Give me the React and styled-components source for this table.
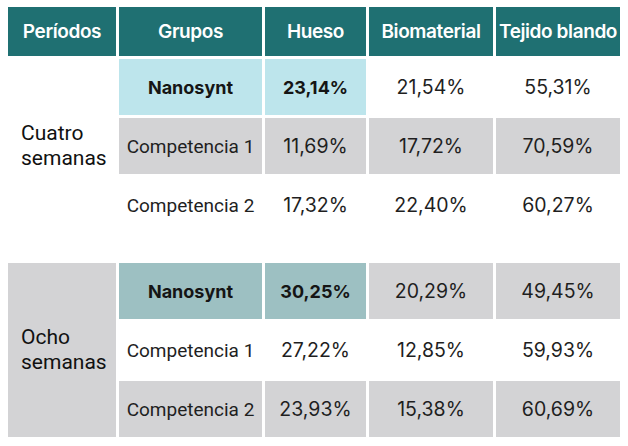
import React from 'react';
import styled, { createGlobalStyle } from 'styled-components';

const GlobalStyle = createGlobalStyle`
  html, body {
    margin: 0;
    padding: 0;
    background: #ffffff;
  }
  body {
    font-family: Roboto, "Liberation Sans", sans-serif;
    color: #1e1e1e;
  }
`;

const Page = styled.div`
  padding: 7px 8px 0 8px;
  display: flex;
  flex-direction: column;
  gap: 3px;
`;

const Grid = styled.div`
  display: grid;
  grid-template-columns: 108px 143px 101px 124px 124px;
  grid-auto-rows: ${props => props.$rowHeight}px;
  gap: 3px;
  margin-top: ${props => props.$offset || 0}px;
`;

const HeadCell = styled.div`
  background: #1f7072;
  color: #ffffff;
  font-family: Inter, "Noto Sans", sans-serif;
  font-weight: 600;
  font-size: 19px;
  letter-spacing: -0.4px;
  display: flex;
  align-items: center;
  justify-content: center;
  white-space: nowrap;
`;

const PeriodCell = styled.div`
  grid-row: span 3;
  background: ${props => props.$bg};
  display: flex;
  align-items: center;
  padding-left: 13px;
  font-size: 21px;
  line-height: 25px;
  color: #111111;
`;

const Cell = styled.div`
  background: ${props => props.$bg};
  display: flex;
  align-items: center;
  justify-content: center;
  white-space: nowrap;
  font-family: ${props => (props.$label && !props.$strong ? 'Roboto, "Liberation Sans", sans-serif' : 'Inter, "Noto Sans", sans-serif')};
  font-size: ${props => (props.$strong ? 18 : props.$label ? 19 : 19.5)}px;
  font-weight: ${props => (props.$strong ? 700 : 400)};
  color: ${props => (props.$strong ? '#151515' : '#1f1f1f')};
`;

const colors = {
  white: 'transparent',
  gray: '#d3d3d5',
  blue: '#bde5ec',
  teal: '#9dc0c2',
};

const headers = ['Períodos', 'Grupos', 'Hueso', 'Biomaterial', 'Tejido blando'];

const sections = [
  {
    period: ['Cuatro', 'semanas'],
    periodBg: colors.white,
    offset: 0,
    rows: [
      { group: 'Nanosynt', values: ['23,14%', '21,54%', '55,31%'], bg: colors.white, highlight: colors.blue, strong: true },
      { group: 'Competencia 1', values: ['11,69%', '17,72%', '70,59%'], bg: colors.gray },
      { group: 'Competencia 2', values: ['17,32%', '22,40%', '60,27%'], bg: colors.white },
    ],
  },
  {
    period: ['Ocho', 'semanas'],
    periodBg: colors.gray,
    offset: 27,
    rows: [
      { group: 'Nanosynt', values: ['30,25%', '20,29%', '49,45%'], bg: colors.gray, highlight: colors.teal, strong: true },
      { group: 'Competencia 1', values: ['27,22%', '12,85%', '59,93%'], bg: colors.white },
      { group: 'Competencia 2', values: ['23,93%', '15,38%', '60,69%'], bg: colors.gray },
    ],
  },
];

export default function App() {
  return (
    <>
      <GlobalStyle />
      <Page>
        <Grid $rowHeight={49}>
          {headers.map(h => (
            <HeadCell key={h}>{h}</HeadCell>
          ))}
        </Grid>
        {sections.map(section => (
          <Grid key={section.period.join(' ')} $rowHeight={56} $offset={section.offset}>
            <PeriodCell $bg={section.periodBg}>
              {section.period[0]}
              <br />
              {section.period[1]}
            </PeriodCell>
            {section.rows.map(row => (
              <React.Fragment key={row.group}>
                <Cell $label $bg={row.highlight || row.bg} $strong={row.strong}>
                  {row.group}
                </Cell>
                {row.values.map((v, i) => (
                  <Cell
                    key={i}
                    $bg={i === 0 && row.highlight ? row.highlight : row.bg}
                    $strong={row.strong && i === 0}
                  >
                    {v}
                  </Cell>
                ))}
              </React.Fragment>
            ))}
          </Grid>
        ))}
      </Page>
    </>
  );
}
